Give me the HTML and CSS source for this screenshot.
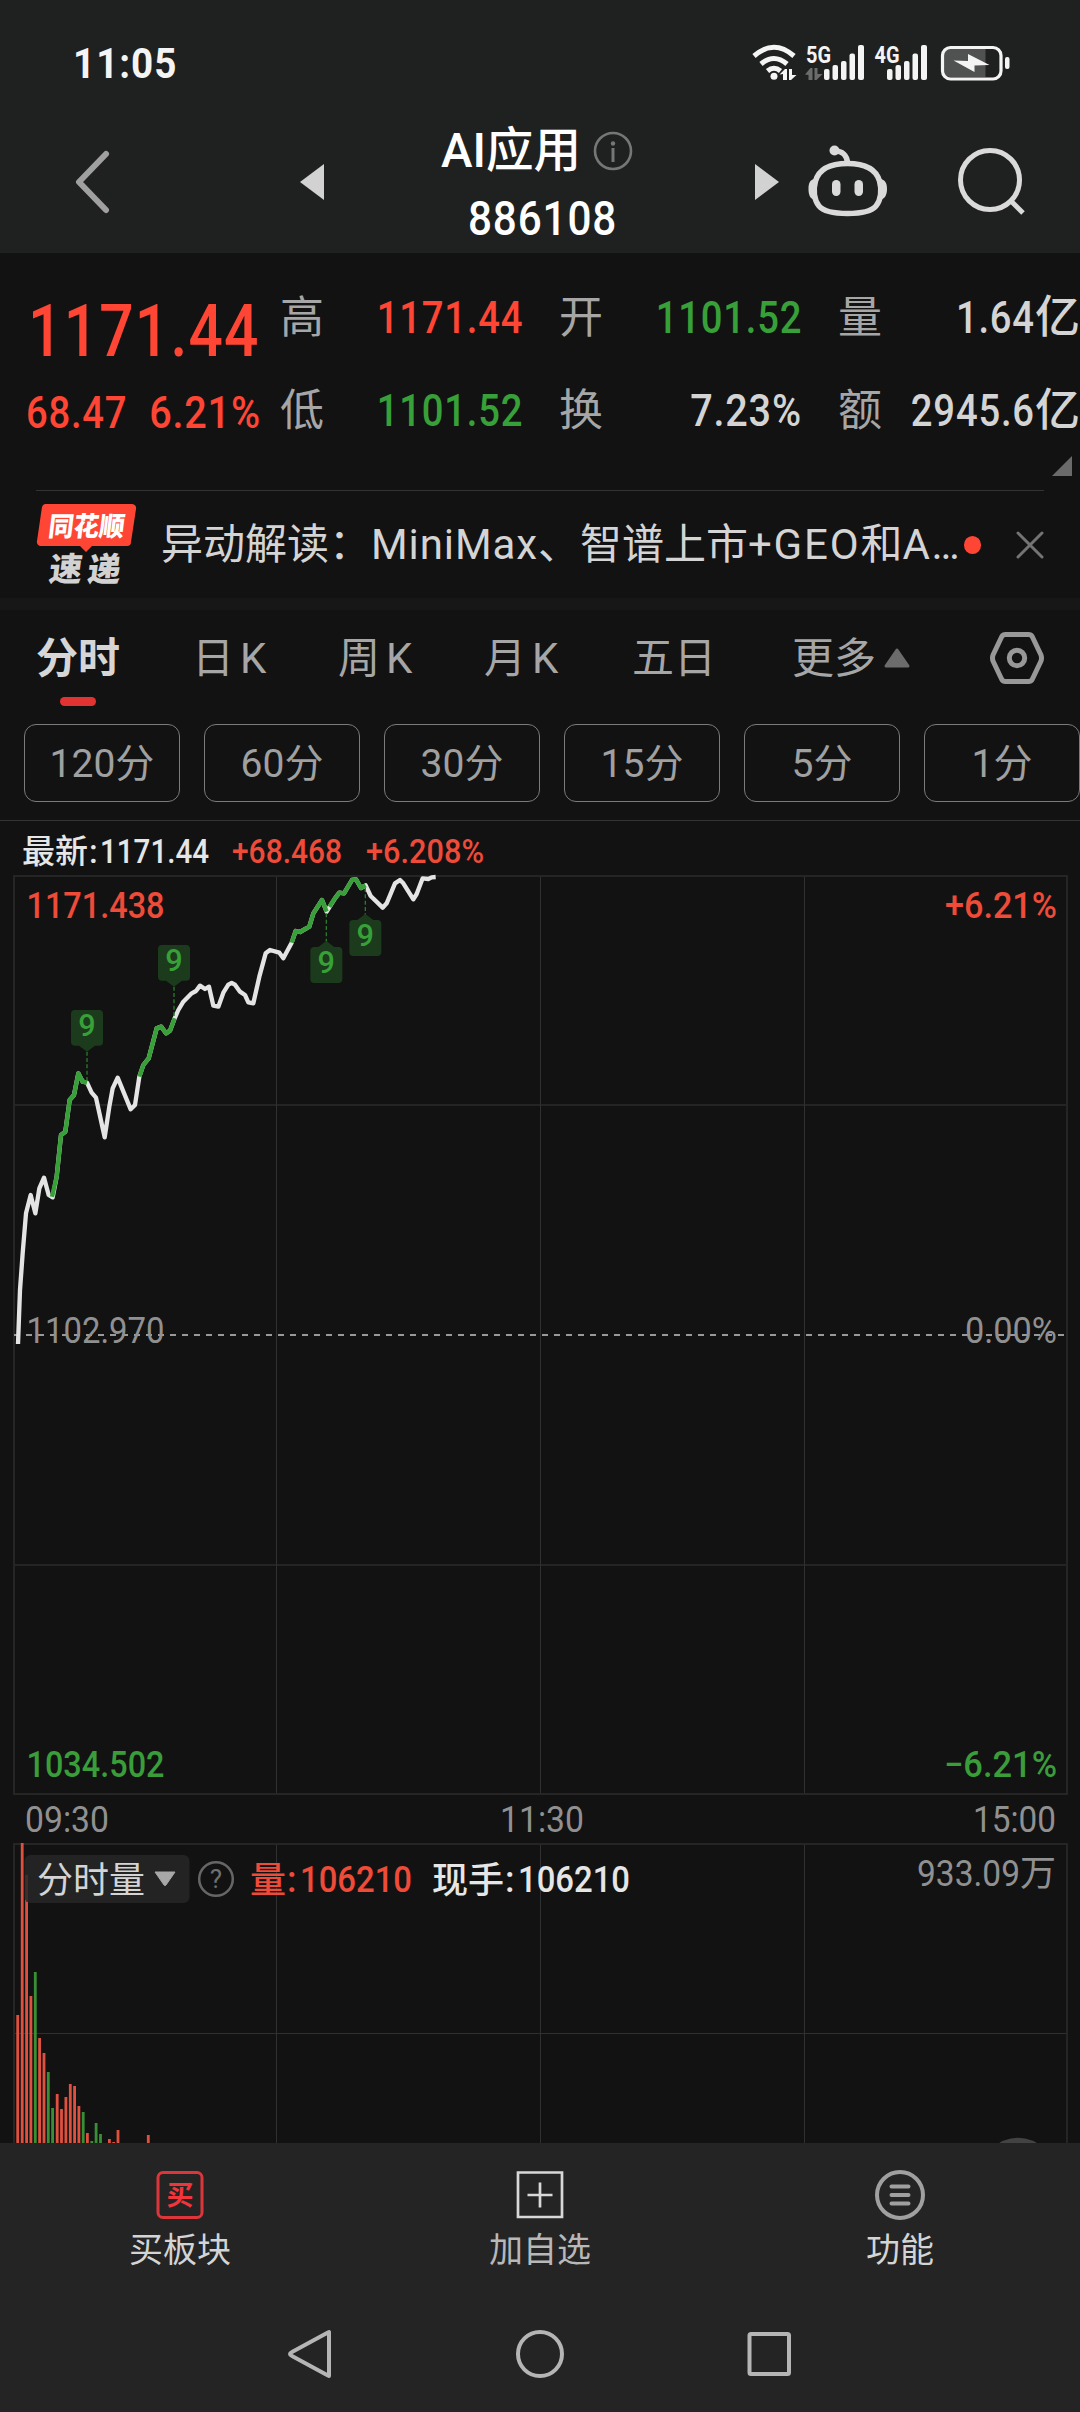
FILE: index.html
```html
<!DOCTYPE html>
<html lang="zh-CN">
<head>
<meta charset="utf-8">
<title>AI应用 886108</title>
<link rel="stylesheet" href="styles.css">
</head>
<body>
<header class="top">
  <div class="status">
    <span class="clock num">11:05</span>
    <svg class="status-icons" viewBox="750 40 262 44" width="262" height="44">
      <g fill="none" stroke="#f4f4f4" stroke-width="5">
        <path d="M754 56Q774 38.500 794 56"/>
        <path d="M761 64Q774 53 787 64"/>
        <path d="M767.500 71Q774 65.500 780.500 71"/>
      </g>
      <circle cx="774" cy="76.300" r="3.500" fill="#f4f4f4"/>
      <path d="M779.500 74.500L785 69h2v11h-4v-6zM789 69h3v6h4.500L791 80h-2z" fill="#f4f4f4"/>
      <text class="net" x="806" y="62.500" textLength="25" lengthAdjust="spacingAndGlyphs">5G</text>
      <path d="M805 74.500L810.500 68h2v12h-4v-5zM814.500 68h3v6h5L816.500 80h-2z" fill="#6a6b6a"/>
      <g fill="#f4f4f4">
        <rect x="824" y="69" width="5.500" height="11" rx="2"/><rect x="832.500" y="65" width="5.500" height="15" rx="2"/><rect x="841" y="61" width="5.500" height="19" rx="2"/><rect x="849.500" y="53.500" width="5.500" height="26.500" rx="2"/><rect x="858" y="45" width="6" height="35" rx="2"/>
        <rect x="887" y="69" width="5.500" height="11" rx="2"/><rect x="895.500" y="65" width="5.500" height="15" rx="2"/><rect x="904" y="61" width="5.500" height="19" rx="2"/><rect x="912.500" y="53.500" width="5.500" height="26.500" rx="2"/><rect x="921" y="45" width="6" height="35" rx="2"/>
      </g>
      <text class="net" x="874.500" y="62.500" textLength="25" lengthAdjust="spacingAndGlyphs">4G</text>
      <path d="M950 48.500h35.500v28.500H950a6 6 0 0 1-6-6V54.500a6 6 0 0 1 6-6z" fill="#505251"/>
      <rect x="942.500" y="47.500" width="58.500" height="31.500" rx="8" fill="none" stroke="#f4f4f4" stroke-width="3.200"/>
      <rect x="1005" y="57" width="4.500" height="12" rx="2" fill="#f4f4f4"/>
      <path d="M953.500 60.500L968 61V54L989.500 65L974.500 65.500V72z" fill="#f4f4f4"/>
    </svg>
  </div>
  <nav class="titlebar">
    <svg class="back" viewBox="0 0 36 64" width="36" height="64"><path d="M32 4L5 32L32 60" fill="none" stroke="#a0a0a0" stroke-width="6" stroke-linecap="round" stroke-linejoin="round"/></svg>
    <svg class="prev" viewBox="0 0 24 36" width="24" height="36"><path d="M24 0v36L0 18z" fill="#d2d2d2"/></svg>
    <div class="title">
      <div class="name">AI应用<svg viewBox="0 0 40 40" width="40" height="40"><circle cx="20" cy="20" r="18" fill="none" stroke="#757676" stroke-width="2.600"/><path d="M20 17v14" stroke="#757676" stroke-width="3"/><circle cx="20" cy="12.500" r="2.200" fill="#757676"/></svg></div>
      <div class="code"><span class="num">886108</span></div>
    </div>
    <svg class="next" viewBox="0 0 24 36" width="24" height="36"><path d="M0 0v36l24-18z" fill="#d2d2d2"/></svg>
    <svg class="robot" viewBox="808 144 80 74" width="80" height="74">
      <g fill="none" stroke="#dadada" stroke-width="5.500">
        <path d="M847.500 163.500C866 163.500 876 169 879.500 181C882 190 881 200 876 206C871 212 860 213.500 847.500 213.500S824 212 819 206C814 200 813 190 815.500 181C819 169 829 163.500 847.500 163.500z"/>
        <path d="M835 151C842 151 847 155 847.500 163"/>
      </g>
      <circle cx="834.500" cy="150.500" r="5" fill="#dadada"/>
      <path d="M814 179c-4 1-5.500 4-5.500 10s1.500 10 7 11zM881 179c4 1 6 4 6 10s-2 10-7.500 11z" fill="#dadada"/>
      <rect x="832" y="180" width="8.500" height="16" rx="4.200" fill="#dadada"/><rect x="854.500" y="180" width="8.500" height="16" rx="4.200" fill="#dadada"/>
    </svg>
    <svg class="search" viewBox="956 146 72 72" width="72" height="72"><g fill="none" stroke="#dadada" stroke-width="5"><circle cx="990" cy="180" r="29.500"/><path d="M1011.500 201.500L1023 213"/></g></svg>
  </nav>
</header>

<section class="quote">
  <div class="main-price up"><span class="num">1171.44</span></div>
  <div class="pair"><b>高</b><span class="num up">1171.44</span></div>
  <div class="pair wide"><b>开</b><span class="num down">1101.52</span></div>
  <div class="pair wide"><b>量</b><span class="val"><span class="num">1.64</span>亿</span></div>
  <div class="change up"><span class="num">68.47</span><span class="num pct">6.21%</span></div>
  <div class="pair"><b>低</b><span class="num down">1101.52</span></div>
  <div class="pair wide"><b>换</b><span class="num pct">7.23%</span></div>
  <div class="pair wide"><b>额</b><span class="val"><span class="num">2945.6</span>亿</span></div>
  <svg class="corner" viewBox="0 0 20 20" width="20" height="20"><path d="M20 0v20H0z" fill="#6a6a6a"/></svg>
</section>

<section class="news">
  <svg viewBox="36 502 102 84" width="102" height="84">
    <path d="M45 503H132a4 4 0 0 1 4 5L131 541a4 4 0 0 1-4 4H92L86 551L80 545H41a4 4 0 0 1-4-5L42 506a4 4 0 0 1 3-3z" fill="#ff4634"/>
    <text class="logo" transform="translate(47.500 534.500) skewX(-7)" font-size="27" textLength="76" lengthAdjust="spacingAndGlyphs" fill="#fff">同花顺</text>
    <text class="logo" transform="translate(48 580) skewX(-7)" x="0 38.500" font-size="33" fill="#d2d2d2">速递</text>
  </svg>
  <p>异动解读：<span class="maker">MiniMax</span>、智谱上市<span class="latin">+GEO</span>和<span class="latin">A…</span></p>
  <i></i>
  <svg viewBox="0 0 28 28" width="28" height="28"><path d="M2 2L26 26M26 2L2 26" stroke="#747474" stroke-width="3" stroke-linecap="round"/></svg>
</section>

<nav class="tabs">
  <span class="tab on">分时</span><span class="tab k">日<em>K</em></span><span class="tab k">周<em>K</em></span><span class="tab k last">月<em>K</em></span><span class="tab days">五日</span><span class="tab">更多</span>
  <svg class="more" viewBox="0 0 26 20" width="26" height="20"><path d="M13 2L24 18H2z" fill="#6c6c6c" stroke="#6c6c6c" stroke-width="3" stroke-linejoin="round"/></svg>
  <svg class="gear" viewBox="988 630 58 56" width="58" height="56"><g fill="none" stroke="#989898" stroke-width="5" stroke-linejoin="round"><path d="M1005.500 634.500H1028.500Q1031 634.500 1032.200 636.500L1041 655Q1042 658 1041 661L1032.200 679.500Q1031 681.500 1028.500 681.500H1005.500Q1003 681.500 1001.800 679.500L993 661Q992 658 993 655L1001.800 636.500Q1003 634.500 1005.500 634.500z"/><circle cx="1017" cy="658" r="7.700"/></g></svg>
</nav>

<div class="periods">
  <button>120分</button><button>60分</button><button>30分</button><button>15分</button><button>5分</button><button>1分</button>
</div>

<main class="chart">
<svg viewBox="0 821 1080 1322" width="1080" height="1322">
  <g stroke="#2b2b2b" stroke-width="1">
    <path d="M14 1105H1067M14 1565H1067" stroke="#242424" stroke-width="2"/>
    <path d="M276.500 876V1795M540.500 876V1795M804.500 876V1795M276.500 1843V2143M540.500 1843V2143M804.500 1843V2143M13 2033.500H1067" stroke="#303030"/>
    <g fill="none" stroke="#252525" stroke-width="2"><rect x="14" y="876" width="1053" height="918"/><path d="M14 2143V1844H1067V2143"/></g>
  </g>
  <path d="M14 1335H1067" stroke="#999" stroke-width="2" stroke-dasharray="6 6"/>

  <g class="labels">
    <g class="up"><text x="26.500" y="918" textLength="138" lengthAdjust="spacingAndGlyphs">1171.438</text><text x="945" y="918" textLength="112" lengthAdjust="spacingAndGlyphs">+6.21%</text></g>
    <g class="muted"><text x="26.500" y="1343" textLength="138" lengthAdjust="spacingAndGlyphs">1102.970</text><text x="965" y="1343" textLength="92" lengthAdjust="spacingAndGlyphs">0.00%</text>
    <text x="25" y="1832" textLength="84" lengthAdjust="spacingAndGlyphs">09:30</text><text x="500" y="1832" textLength="84" lengthAdjust="spacingAndGlyphs">11:30</text><text x="973" y="1832" textLength="83" lengthAdjust="spacingAndGlyphs">15:00</text><text x="917" y="1886" textLength="103" lengthAdjust="spacingAndGlyphs">933.09</text><text x="1020" y="1886" textLength="36" lengthAdjust="spacingAndGlyphs">万</text></g>
    <g class="down"><text x="26.500" y="1777" textLength="138" lengthAdjust="spacingAndGlyphs">1034.502</text><text x="944" y="1777" textLength="113" lengthAdjust="spacingAndGlyphs">−6.21%</text></g>
  </g>
  <g class="latest">
    <text x="22" y="863" fill="#e6e6e6" textLength="66" lengthAdjust="spacingAndGlyphs">最新</text><text x="89" y="863" fill="#e6e6e6">:</text>
    <text x="100" y="862.500" fill="#e6e6e6" textLength="109" lengthAdjust="spacingAndGlyphs">1171.44</text>
    <text class="up" x="232" y="862.500" textLength="110" lengthAdjust="spacingAndGlyphs">+68.468</text>
    <text class="up" x="366" y="862.500" textLength="118" lengthAdjust="spacingAndGlyphs">+6.208%</text>
  </g>

  <g transform="translate(0 860) scale(.33333)" fill="none" stroke-width="13" stroke-linejoin="round">
    <path stroke="#e4e4e4" d="M54 1452L60 1290L68 1180L78 1060L92 1005L106 1060L118 985L132 953L146 1005L158 1012L170 950L183 825L196 815L209 720L222 705L235 640L248 665L261 668L275 698L288 713L314 832L328 740L338 685L353 653L392 748L405 735L418 650L430 615L446 595L470 505L484 500L498 520L510 512L524 475L535 450L550 425L575 400L588 393L600 377L615 387L627 380L640 437L655 440L670 398L685 374L695 369L705 374L720 395L735 405L745 427L760 430L778 350L797 280L810 270L838 278L850 295L875 248L887 213L900 216L928 200L940 160L966 120L980 155L1005 115L1018 98L1032 100L1056 60L1068 58L1083 84L1097 76L1112 108L1148 143L1160 130L1185 70L1200 60L1210 70L1240 118L1250 102L1268 55L1285 57L1295 52L1307 51"/>
    <path stroke="#38a038" d="M156 1010L170 950L183 825L196 815L209 720L222 705L235 640L248 665L261 668M418 650L430 615L446 595L470 505L484 500L498 520L510 512L524 475M875 248L887 213L900 216L928 200L940 160L966 120L980 155M988 140L1005 115L1018 98L1032 100L1056 60L1068 58L1083 84L1097 76"/>
    <path stroke="#287a2c" stroke-width="4" stroke-dasharray="12 7" d="M261 575V668M522 380V470M979 160V245M1096 84V165"/>
    <g fill="#1b3b1c">
      <path d="M225 450h72q12 0 12 12v83q0 12-12 12h-12l-24 18l-24-18h-12q-12 0-12-12v-83q0-12 12-12z"/>
      <path d="M486 255h72q12 0 12 12v83q0 12-12 12h-12l-24 18l-24-18h-12q-12 0-12-12v-83q0-12 12-12z"/>
      <path d="M943 261h12l24-18l24 18h12q12 0 12 12v84q0 12-12 12h-72q-12 0-12-12v-84q0-12 12-12z"/>
      <path d="M1060 180h12l24-18l24 18h12q12 0 12 12v84q0 12-12 12h-72q-12 0-12-12v-84q0-12 12-12z"/>
    </g>
    <g class="nine"><text x="261" y="528">9</text><text x="522" y="333">9</text><text x="979" y="339">9</text><text x="1096" y="258">9</text></g>
  </g>

  <g fill="none" stroke-width="2.800">
    <path stroke="#e0503f" d="M17.700 2143V2015M22.200 2143V1843M26.600 2143V1875M30.900 2143V1996M39.600 2143V2038M44 2143V2053M57.200 2143V2094M61.500 2143V2109M65.900 2143V2097M70.300 2143V2084M74.600 2143V2086M78.900 2143V2106M87.400 2143V2133M109.400 2143V2139M113.700 2143V2142M118 2143V2130M148.300 2143V2135"/>
    <path stroke="#388f35" d="M35.300 2143V1972M48.300 2143V2072M52.600 2143V2108M83.200 2143V2112M91.800 2143V2141M96.100 2143V2123M100.500 2143V2134"/>
  </g>
  <rect x="24.500" y="1855" width="165" height="48" rx="6" fill="#272727" fill-opacity=".85"/>
  <g class="labels">
    <text x="37" y="1893" fill="#d4d4d4" textLength="108" lengthAdjust="spacingAndGlyphs">分时量</text>
    <path d="M155 1872h20l-9 13q-1 1-2 0z" fill="#a8a8a8" stroke="#a8a8a8" stroke-linejoin="round"/>
    <circle cx="216" cy="1879" r="16.800" fill="none" stroke="#666" stroke-width="2.500"/>
    <text class="q" x="216" y="1888">?</text>
    <text class="up" x="250" y="1893">量</text><text class="up" x="287" y="1892">:</text><text class="up" x="300" y="1892" textLength="112" lengthAdjust="spacingAndGlyphs">106210</text>
    <g class="now"><text x="432" y="1893" textLength="72" lengthAdjust="spacingAndGlyphs">现手</text><text x="505" y="1892">:</text><text x="518" y="1892" textLength="112" lengthAdjust="spacingAndGlyphs">106210</text></g>
  </g>
  <circle cx="1018" cy="2174.500" r="36.700" fill="#434343"/>
</svg>
</main>

<footer>
  <div class="actions">
    <div><svg viewBox="0 0 50 50" width="50" height="50"><rect x="3" y="2.500" width="44" height="45" rx="5" fill="none" stroke="#dc363b" stroke-width="3"/><text class="buy" x="25" y="34.500">买</text></svg><span>买板块</span></div>
    <div class="dim"><svg viewBox="0 0 50 50" width="50" height="50"><path d="M3 2.500H47V47H3zM12.500 25H37.500M25 12.500V37.500" fill="none" stroke="#d8d8d8" stroke-width="2.700"/></svg><span>加自选</span></div>
    <div><svg viewBox="0 0 50 50" width="50" height="50"><circle cx="25" cy="25" r="23" fill="none" stroke="#a0a0a0" stroke-width="4"/><path d="M16.500 16.500H33.500M16.500 25H33.500M16.500 33.500H33.500" stroke="#a0a0a0" stroke-width="4" stroke-linecap="round"/></svg><span>功能</span></div>
  </div>
  <div class="keys">
    <svg viewBox="0 0 52 52" width="52" height="52"><path d="M44 4V48Q44 48 42 47L7 28Q3 26 7 24L42 5z" fill="none" stroke="#b5b5b5" stroke-width="4" stroke-linejoin="round"/></svg>
    <svg viewBox="0 0 52 52" width="52" height="52"><circle cx="26" cy="26" r="22" fill="none" stroke="#b5b5b5" stroke-width="4"/></svg>
    <svg viewBox="0 0 52 52" width="52" height="52"><rect x="6.500" y="6" width="39.500" height="40" rx="1.500" fill="none" stroke="#b5b5b5" stroke-width="4"/></svg>
  </div>
</footer>
</body>
</html>
```
FILE: styles.css
```css
* { box-sizing: border-box; }
body {
  margin: 0;
  width: 1080px;
  height: 2412px;
  overflow: hidden;
  background: #121212;
  color: #d4d4d4;
  font-family: Roboto, "Noto Sans CJK SC", sans-serif;
}
svg { display: block; flex: none; }
.up { color: #ff4634; fill: #ee4b39; }
.down { color: #38a038; fill: #3a9d3a; }
.muted { fill: #909090; }

/* condensed figures */
.num {
  display: inline-block;
  transform: scaleX(.85);
  transform-origin: right;
  letter-spacing: .02em;
}
.num.pct { transform: scaleX(.88); }

.top { height: 253px; background: #1f2120; }
.status { height: 122px; padding: 40px 68px 0 73px; display: flex; justify-content: space-between; }
.clock { font-size: 42px; line-height: 48px; font-weight: 700; color: #f4f4f4; transform: scaleX(.92); transform-origin: left; letter-spacing: .025em; }
.net { font: 700 23px Roboto, sans-serif; fill: #f4f4f4; }
.titlebar { height: 131px; display: flex; align-items: flex-start; }
.back { margin: 28px 0 0 74px; }
.prev { margin: 42px 0 0 190px; }
.title { margin: 0 0 0 117px; width: 200px; color: #fff; font-weight: 500; }
.name { display: flex; align-items: center; height: 58px; font-size: 47.5px; line-height: 58px; white-space: nowrap; gap: 12px; }
.code { height: 76px; font-size: 48px; line-height: 77px; padding-left: 27px; }
.code .num { transform: scaleX(.88); transform-origin: left; }
.next { margin: 42px 0 0 114px; }
.robot { margin: 22px 0 0 29px; }
.search { margin: 24px 0 0 68px; }

.quote {
  height: 237px;
  padding-top: 18px;
  display: grid;
  position: relative;
  grid-template-columns: 260px 263px 279px 278px;
  grid-auto-rows: 93px;
  font-size: 45px;
  font-weight: 500;
  line-height: 94px;
  white-space: nowrap;
}
.pair { display: flex; justify-content: space-between; padding-left: 20px; }
.pair.wide { padding-left: 36px; }
.pair b { font-size: 44px; font-weight: 400; color: #a6a6a6; }
.main-price { display: flex; justify-content: flex-end; font-size: 72px; line-height: 121px; }
.main-price .num { transform: scaleX(.84); }
.change { display: flex; justify-content: flex-end; gap: 7px; line-height: 97px; }
.change .num:last-child { margin-right: -1px; }
.corner { position: absolute; left: 1052px; top: 203px; }

.news {
  margin: 0 36px;
  height: 108px;
  border-top: 1px solid #333;
  display: flex;
  align-items: center;
}
.news p { margin: 0 0 0 23px; width: 804px; font-size: 42px; white-space: nowrap; line-height: 60px; }
.maker { letter-spacing: .9px; }
.latin { letter-spacing: 1.8px; }
.news i { width: 18px; height: 18px; border-radius: 50%; background: #ff4634; margin-left: 2px; }
.news svg:last-child { margin-left: 35px; }

.tabs {
  border-top: 12px solid #171717;
  height: 126px;
  padding-left: 36px;
  display: flex;
  font-size: 42px;
  line-height: 98px;
  color: #a6a6a6;
}
.tab { flex: none; width: 84px; margin-right: 72px; white-space: nowrap; position: relative; }
.tab.k { margin-right: 62px; }
.tab.k.last { margin-right: 64px; }
.tab.days { margin-right: 76px; }
.tab em { font-style: normal; margin-left: 6px; }
.tab.on { color: #d6d6d6; font-weight: 700; }
.tab.on::after { content: ""; position: absolute; left: 24px; top: 87px; width: 36px; height: 9px; border-radius: 5px; background: #e23333; }
.more { margin: 38px 0 0 -64px; }
.gear { margin: 20px 0 0 78px; }

.periods { height: 97px; display: flex; gap: 24px; padding-left: 24px; border-bottom: 1px solid #333; }
.periods button {
  flex: none;
  width: 156px;
  height: 78px;
  padding: 0;
  border: 1px solid #7b7b7b;
  border-radius: 12px;
  background: none;
  color: #a0a0a0;
  font: 400 39px/78px Roboto, "Noto Sans CJK SC", sans-serif;
}

.chart { height: 1322px; }
.labels text { font-size: 36px; }
.muted text { font-weight: 400; }
.up text, .down text { font-weight: 500; }
.latest text { font-size: 33px; font-weight: 500; }
.nine text { font: 500 92px Roboto, sans-serif; text-anchor: middle; fill: #38a038; stroke: none; }
.labels .q { font-size: 26px; text-anchor: middle; fill: #707070; }
.labels text.up, .now text { font-weight: 500; }
.now { fill: #e6e6e6; }
.logo { font-weight: 900; font-family: "Noto Sans CJK SC", sans-serif; }

footer { height: 269px; background: #242424; }
.actions { display: grid; grid-template-columns: repeat(3, 1fr); height: 154px; padding-top: 27px; }
.actions div { display: flex; flex-direction: column; align-items: center; font-size: 34px; line-height: 50px; gap: 5px; }
.actions .dim { color: #b8b8b8; }
.buy { font-size: 27px; font-weight: 700; text-anchor: middle; fill: #f0353b; }
.keys { display: flex; justify-content: center; gap: 177px; padding-top: 31px; }
```
